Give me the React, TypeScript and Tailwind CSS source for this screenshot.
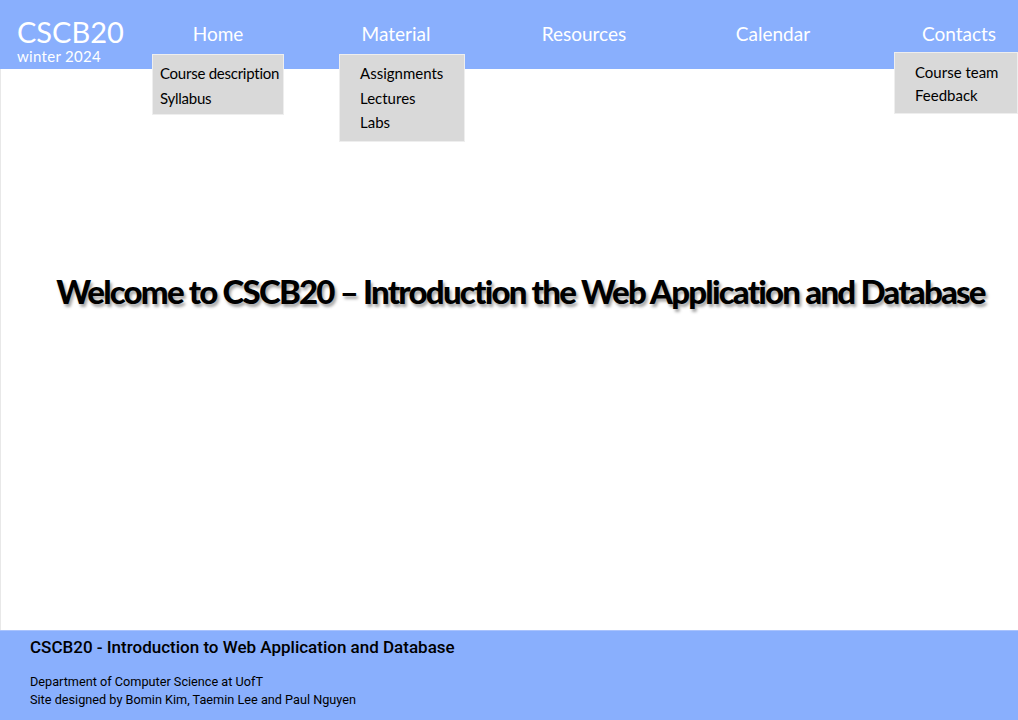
const navFont = { fontFamily: '"Lato", "Noto Sans", sans-serif' };

type NavItem = { label: string; width: string; menu?: { items: string[]; box: string } };

const navItems: NavItem[] = [
  {
    label: 'Home',
    width: 'w-[156px]',
    menu: {
      items: ['Course description', 'Syllabus'],
      box: 'left-[12px] top-[54px] w-[132px] pl-[7px] pt-[6px] pb-[4px] leading-[24.5px] tracking-[-0.25px]',
    },
  },
  {
    label: 'Material',
    width: 'w-[200px]',
    menu: {
      items: ['Assignments', 'Lectures', 'Labs'],
      box: 'left-[43px] top-[54px] w-[126px] pl-[20px] pt-[6px] pb-[6px] leading-[24.5px]',
    },
  },
  { label: 'Resources', width: 'w-[176px]' },
  { label: 'Calendar', width: 'w-[202px]' },
  {
    label: 'Contacts',
    width: 'w-[144px] pl-[26px]',
    menu: {
      items: ['Course team', 'Feedback'],
      box: 'left-[20px] top-[52px] w-[124px] pl-[20px] pt-[8px] pb-[6px] leading-[23px]',
    },
  },
];

const App: React.FC = () => {
  return (
    <div className="flex min-h-[720px] flex-col bg-white">
      <header className="flex h-[69px] bg-[#89affd] text-white" style={navFont}>
        <div className="w-[140px] shrink-0 pl-[17px] pt-[16px]">
          <div className="text-[29px] leading-[32px]">CSCB20</div>
          <div className="text-[15px] leading-[16px] tracking-[0.3px]">winter 2024</div>
        </div>
        <nav className="flex">
          {navItems.map((item) => (
            <div key={item.label} className={`relative shrink-0 ${item.width}`}>
              <div className="pt-[22px] text-center text-[19px] leading-[24px]">{item.label}</div>
              {item.menu && (
                <ul
                  className={`absolute z-10 whitespace-nowrap border border-[#eeeeee] bg-[#d9d9d9] text-[15px] text-black ${item.menu.box}`}
                >
                  {item.menu.items.map((m) => (
                    <li key={m}>{m}</li>
                  ))}
                </ul>
              )}
            </div>
          ))}
        </nav>
      </header>

      <main className="flex h-[561px] items-start justify-center border-l border-[#e8e8e8] pl-[22px] pt-[202px]">
        <h1
          className="whitespace-nowrap text-[33px] font-black leading-[40px] tracking-[-1.8px] text-black"
          style={{ ...navFont, textShadow: '2px 3px 3px rgba(0,0,0,0.35)' }}
        >
          Welcome to CSCB20 – Introduction the Web Application and Database
        </h1>
      </main>

      <footer
        className="h-[90px] border-t border-[#a9c3fd] bg-[#89affd] px-[30px] pt-[6px] text-black"
        style={{ fontFamily: 'Roboto, "Liberation Sans", sans-serif' }}
      >
        <div className="text-[17px] font-medium leading-[20px]">
          CSCB20 - Introduction to Web Application and Database
        </div>
        <div className="mt-[16px] text-[12.7px] leading-[18px]">
          <p>Department of Computer Science at UofT</p>
          <p>Site designed by Bomin Kim, Taemin Lee and Paul Nguyen</p>
        </div>
      </footer>
    </div>
  );
};

export default App;
